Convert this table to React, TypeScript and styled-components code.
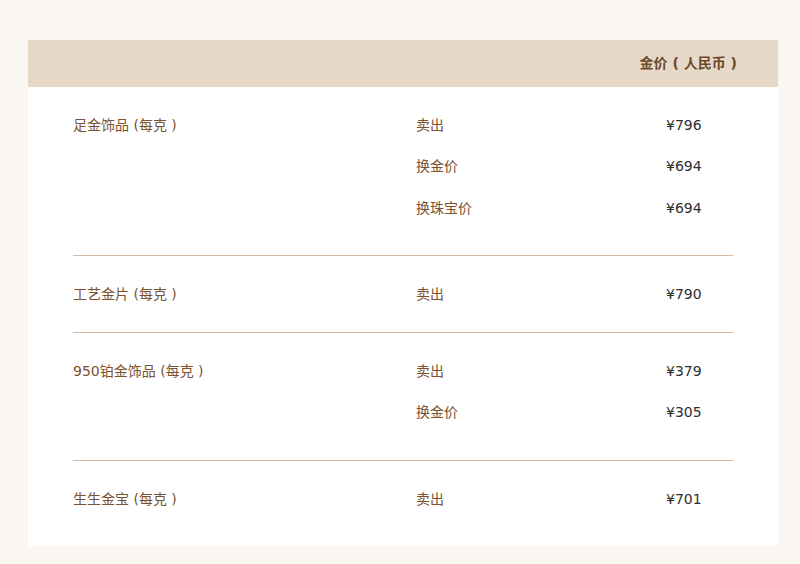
import React from "react";
import styled, { createGlobalStyle } from "styled-components";

const Global = createGlobalStyle`
  html, body { margin: 0; padding: 0; background: #faf6f1; }
  body { font-family: "DejaVu Sans", "Noto Sans CJK SC", sans-serif; }
`;

const Page = styled.div`
  padding: 40px 22px 18px 28px;
  background: #faf6f1;
`;

const Card = styled.div`
  background: #ffffff;
  width: 750px;
`;

const Header = styled.div`
  height: 47px;
  box-sizing: border-box;
  padding: 0 41px 3px 0;
  background: #e8d8c8;
  display: flex;
  align-items: center;
  justify-content: flex-end;
`;

const HeaderTitle = styled.span`
  font-size: 14px;
  font-weight: 700;
  color: #6b4a2b;
`;

const Body = styled.div`
  padding: 0 45px;
`;

const Group = styled.div<{ $pb: number; $last?: boolean }>`
  display: grid;
  grid-template-columns: 343px 1fr;
  padding-top: 16px;
  padding-bottom: ${(p) => p.$pb}px;
  border-bottom: ${(p) => (p.$last ? "none" : "1px solid #d8bb9d")};
`;

const Name = styled.div`
  height: 41.5px;
  display: flex;
  align-items: center;
  font-size: 14px;
  color: #7a5230;
`;

const Rows = styled.div`
  display: flex;
  flex-direction: column;
`;

const Row = styled.div`
  height: 41.5px;
  display: grid;
  grid-template-columns: 250px 1fr;
  align-items: center;
  font-size: 14px;
`;

const Kind = styled.span`
  color: #7a5230;
`;

const Price = styled.span`
  color: #2e2e2e;
  position: relative;
  top: 1px;
`;

type Item = { name: string; rows: [string, string][]; pb: number };

const data: Item[] = [
  {
    name: "足金饰品 (每克 )",
    rows: [
      ["卖出", "¥796"],
      ["换金价", "¥694"],
      ["换珠宝价", "¥694"],
    ],
    pb: 27.5,
  },
  { name: "工艺金片 (每克 )", rows: [["卖出", "¥790"]], pb: 18.5 },
  {
    name: "950铂金饰品 (每克 )",
    rows: [
      ["卖出", "¥379"],
      ["换金价", "¥305"],
    ],
    pb: 28,
  },
  { name: "生生金宝 (每克 )", rows: [["卖出", "¥701"]], pb: 27.5 },
];

export default function App() {
  return (
    <>
      <Global />
      <Page>
        <Card>
          <Header>
            <HeaderTitle>金价 ( 人民币 )</HeaderTitle>
          </Header>
          <Body>
            {data.map((g, i) => (
              <Group key={g.name} $pb={g.pb} $last={i === data.length - 1}>
                <Name>{g.name}</Name>
                <Rows>
                  {g.rows.map(([k, v]) => (
                    <Row key={k}>
                      <Kind>{k}</Kind>
                      <Price>{v}</Price>
                    </Row>
                  ))}
                </Rows>
              </Group>
            ))}
          </Body>
        </Card>
      </Page>
    </>
  );
}
